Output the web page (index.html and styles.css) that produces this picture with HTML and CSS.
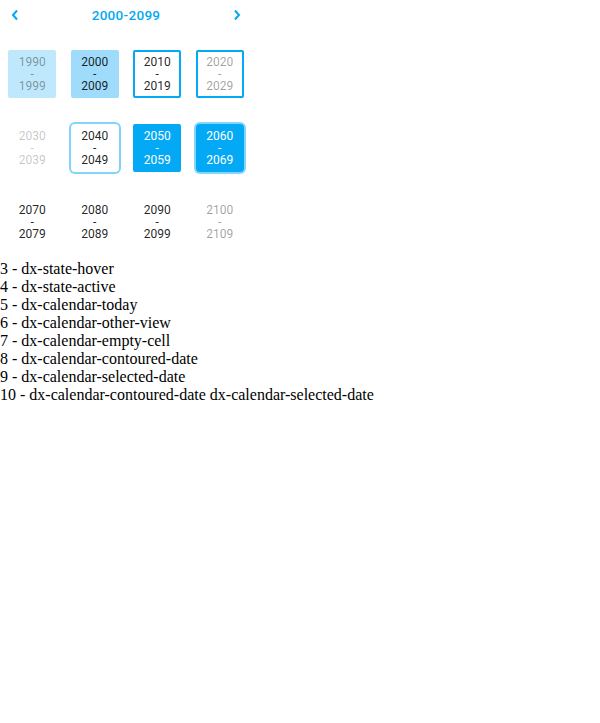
FILE: index.html
```html
<!DOCTYPE html>
<html>
<head>
<meta charset="utf-8">
<link rel="stylesheet" href="styles.css">
</head>
<body>
<div class="calendar">
  <div class="nav">
    <span class="nav-btn"><svg width="8" height="12" viewBox="0 0 8 12"><path d="M6 1.5 L2 6 L6 10.5" fill="none" stroke="#03a9f4" stroke-width="2"/></svg></span>
    <span class="caption">2000-2099</span>
    <span class="nav-btn"><svg width="8" height="12" viewBox="0 0 8 12"><path d="M2 1.5 L6 6 L2 10.5" fill="none" stroke="#03a9f4" stroke-width="2"/></svg></span>
  </div>
  <div class="grid">
    <div class="cell"><span class="inner hover other">1990<br>-<br>1999</span></div>
    <div class="cell"><span class="inner active">2000<br>-<br>2009</span></div>
    <div class="cell"><span class="inner today">2010<br>-<br>2019</span></div>
    <div class="cell"><span class="inner today other">2020<br>-<br>2029</span></div>
    <div class="cell"><span class="inner empty">2030<br>-<br>2039</span></div>
    <div class="cell"><span class="inner contoured">2040<br>-<br>2049</span></div>
    <div class="cell"><span class="inner selected">2050<br>-<br>2059</span></div>
    <div class="cell"><span class="inner contoured selected">2060<br>-<br>2069</span></div>
    <div class="cell"><span class="inner">2070<br>-<br>2079</span></div>
    <div class="cell"><span class="inner">2080<br>-<br>2089</span></div>
    <div class="cell"><span class="inner">2090<br>-<br>2099</span></div>
    <div class="cell"><span class="inner other">2100<br>-<br>2109</span></div>
  </div>
</div>
<div class="legend">
  <div>3 - dx-state-hover</div>
  <div>4 - dx-state-active</div>
  <div>5 - dx-calendar-today</div>
  <div>6 - dx-calendar-other-view</div>
  <div>7 - dx-calendar-empty-cell</div>
  <div>8 - dx-calendar-contoured-date</div>
  <div>9 - dx-calendar-selected-date</div>
  <div>10 - dx-calendar-contoured-date dx-calendar-selected-date</div>
</div>
</body>
</html>
```
FILE: styles.css
```css
html, body {
  margin: 0;
  padding: 0;
  background: #fff;
}
.calendar {
  width: 250px;
  padding-left: 1px;
  font-family: Roboto, "Liberation Sans", sans-serif;
}
.nav {
  display: flex;
  align-items: center;
  justify-content: space-between;
  height: 30px;
  margin-bottom: 7px;
  padding: 0 9px 0 9px;
}
.nav-btn {
  display: flex;
  width: 10px;
  justify-content: center;
}
.caption {
  color: #03a9f4;
  font-size: 13.5px;
  font-weight: 500;
  letter-spacing: 0.3px;
}
.grid {
  display: grid;
  grid-template-columns: repeat(4, 62.5px);
  grid-auto-rows: 74px;
}
.cell {
  display: flex;
  align-items: center;
  justify-content: center;
}
.inner {
  box-sizing: border-box;
  width: 48px;
  height: 48px;
  display: flex;
  align-items: center;
  justify-content: center;
  text-align: center;
  font-size: 12px;
  line-height: 12px;
  color: rgba(0, 0, 0, 0.87);
  border-radius: 2px;
}
.hover {
  background: #c0e8fc;
}
.active {
  background: #9fdcfb;
}
.today {
  border: 2px solid #03a9f4;
}
.other {
  color: rgba(0, 0, 0, 0.38);
}
.empty {
  color: rgba(0, 0, 0, 0.24);
}
.contoured {
  box-shadow: 0 0 0 2px #81d4fa;
  border-radius: 4px;
}
.selected {
  background: #03a9f4;
  color: #fff;
}
.legend {
  margin-top: 1px;
  font-family: "Liberation Serif", serif;
  font-size: 16px;
  line-height: 18px;
  color: #000;
}
```
